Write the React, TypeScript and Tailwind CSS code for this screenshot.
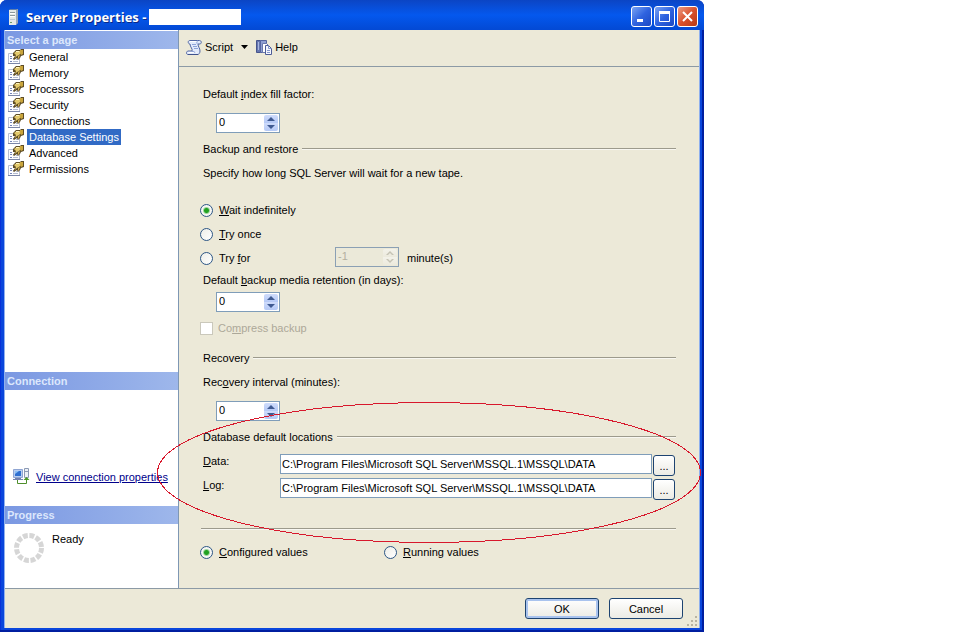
import { useState } from 'react';
import type { ReactNode } from 'react';

const pages = [
  'General',
  'Memory',
  'Processors',
  'Security',
  'Connections',
  'Database Settings',
  'Advanced',
  'Permissions',
];

function ServerIcon() {
  return (
    <svg width="16" height="16" viewBox="0 0 16 16" aria-hidden="true">
      <path d="M3 1l1-1h8v14l-2 2H3z" fill="#5f7fae" />
      <path d="M3 1h7v15H3z" fill="#e3e8e6" />
      <path d="M10 1l2-1v14l-2 2z" fill="#9aa7b5" />
      <path d="M4 3h5v1H4zM4 6h5v1H4z" fill="#8b979c" />
      <path d="M4 4h5v1H4zM4 7h5v1H4z" fill="#fff" />
      <path d="M4 10h5v1H4z" fill="#bcc8d2" />
      <path d="M4 13h2v1H4z" fill="#6d9b6d" />
    </svg>
  );
}

function PageIcon() {
  return (
    <svg width="16" height="16" viewBox="0 0 16 16" aria-hidden="true" className="shrink-0">
      <path d="M.5 4.500h11v10H.5z" fill="#fdfdff" stroke="#b9bfd0" />
      <path d="M0 14.500h12" stroke="#7b86a8" />
      <path d="M2 7h2v1H2zM2 9h2v1H2zM2 12h2v1H2z" fill="#7383b8" />
      <path d="M5 9h2v1H5zM5 12h5v1H5zM8 10h2v1H8z" fill="#b3bbd0" />
      <path d="M5 4l3-3h4l1-1h3v6l-3 1-1 2-2 2-1-2-3 2-1-1 2-3-2 0z" fill="#5e4d26" />
      <path d="M6 4l3-2h3l1 2-2 2-2 1-2 2 1-3z" fill="#e3c96b" />
      <path d="M12 1h3v4l-2 1-1-2z" fill="#c9a53c" />
      <path d="M8 2h3v1H8z" fill="#fff3bd" />
      <path d="M10 7l2-1-1 3-1 1z" fill="#d0b052" />
    </svg>
  );
}

function ScriptIcon() {
  return (
    <svg width="17" height="17" viewBox="0 0 17 17" aria-hidden="true">
      <path
        d="M3.500 1.500h10c2 0 2.500 3 .5 3.500h-2c0 3 2 4 2 7 0 2-1 3.500-2.500 3.500H2c-2 0-2-3 0-3.500h4c1-2-2-4-2-7-2 0-2.500-3-.5-3.500z"
        fill="#e2eafb"
        stroke="#5166a3"
      />
      <path d="M4 2.500h8M2.500 13.500h8" stroke="#fff" />
      <path d="M11.500 5c-1-1-1-2.500.5-3.500M6 12.500c1.500 0 3 0 3 1.500M6 5.500h4M7 7.500h4M8 9.500h4" fill="none" stroke="#8da3d8" />
      <path d="M2 15.500h10" stroke="#3f528d" />
    </svg>
  );
}

function HelpIcon() {
  return (
    <svg width="17" height="17" viewBox="0 0 17 17" aria-hidden="true">
      <path d="M.5 1.500h4v12h-4z" fill="#6677b0" stroke="#46558c" />
      <path d="M4.500 1.500h6v12h-6z" fill="#8e9fd2" stroke="#5565a0" />
      <path d="M2.500 3v8" stroke="#a9b7e2" />
      <path d="M6.500 4.500h4l2 2v7h-6z" fill="#fff" stroke="#6a79ad" />
      <path d="M9.500 6.500h3l3 3v6h-6z" fill="#f4f7fe" stroke="#4d5d97" />
      <path d="M12.500 6.500v3h3M11 11.500h3M11 13.500h3" fill="none" stroke="#8496cc" />
    </svg>
  );
}

function ConnectionIcon() {
  return (
    <svg width="17" height="17" viewBox="0 0 17 17" aria-hidden="true">
      <path d="M.5 1.500h9v8h-9z" fill="#b8cdf0" stroke="#8fa5d2" />
      <path d="M2 3h6v5H2z" fill="#2f6fd0" />
      <path d="M2 3h4L2 6z" fill="#8cc0f5" />
      <path d="M2 10h6v1h2v1H0v-1h2z" fill="#7382ae" />
      <path d="M11.500 .5h4v9h-4z" fill="#edf1f6" stroke="#8c9ab5" />
      <path d="M12 3h3v1h-3z" fill="#8c9ab5" />
      <path d="M4.500 12v3.500h9v-4" fill="none" stroke="#4f8f2c" />
      <path d="M10.500 12l3-3 3 3z" fill="#4a9a22" />
    </svg>
  );
}

function IdleSpinner() {
  return (
    <svg width="32" height="32" viewBox="0 0 32 32" aria-hidden="true">
      <circle cx="16" cy="16" r="12.500" fill="none" stroke="#d6d6d6" strokeWidth="5" strokeDasharray="4.900 1.645" />
    </svg>
  );
}

function TitleButton({ label, close, children }: { label: string; close?: boolean; children: ReactNode }) {
  return (
    <button
      type="button"
      aria-label={label}
      className={
        close
          ? 'flex size-[21px] items-center justify-center rounded-[3px] border border-white bg-linear-to-br from-[#ec9a80] via-[#d9512c] to-[#b93a14]'
          : 'flex size-[21px] items-center justify-center rounded-[3px] border border-white bg-linear-to-br from-[#7ba2f2] via-[#2f63e0] to-[#1b48c4]'
      }
    >
      <svg width="15" height="15" viewBox="0 0 15 15" fill="none" stroke="#fff" aria-hidden="true">
        {children}
      </svg>
    </button>
  );
}

function SidebarHeader({ children }: { children: ReactNode }) {
  return (
    <h2 className="h-[18px] shrink-0 bg-linear-to-r from-[#7b98e2] to-[#9eb7eb] px-[2px] text-[11px] leading-[18px] font-bold text-[#dce7fc]">
      {children}
    </h2>
  );
}

function Spin({ id, label, initial, disabled }: { id: string; label?: string; initial: number; disabled?: boolean }) {
  const [value, setValue] = useState(initial);
  const arrow = disabled ? '#c5c3b4' : '#3f5a92';
  const step =
    'flex h-2 w-full items-center justify-center bg-linear-to-b from-[#cfdcfb] to-[#b5c9f6] disabled:from-[#f3f2ea] disabled:to-[#eceadd]';

  return (
    <div
      className={
        disabled
          ? 'flex h-5 w-16 border border-[#8ba0b4] bg-[#ebe9d9] p-px'
          : 'flex h-5 w-16 border border-[#7f9db9] bg-white p-px'
      }
    >
      <input
        id={id}
        aria-label={label}
        type="number"
        value={value}
        disabled={disabled}
        onChange={(e) => setValue(Number(e.target.value))}
        className="h-[14px] min-w-0 flex-1 appearance-none px-px leading-[14px] outline-none [-moz-appearance:textfield] disabled:text-[#b3b09f] [&::-webkit-inner-spin-button]:appearance-none"
      />
      <div className="w-[14px] overflow-hidden rounded-[2px]">
        <button type="button" aria-label="Increase" disabled={disabled} onClick={() => setValue(value + 1)} className={step}>
          <svg width="8" height="4" viewBox="0 0 8 4" aria-hidden="true">
            <path d={disabled ? 'M4 0l4 4H6L4 2 2 4H0z' : 'M4 0l4 4H0z'} fill={arrow} />
          </svg>
        </button>
        <button type="button" aria-label="Decrease" disabled={disabled} onClick={() => setValue(value - 1)} className={step}>
          <svg width="8" height="4" viewBox="0 0 8 4" aria-hidden="true">
            <path d={disabled ? 'M4 4l4-4H6L4 2 2 0H0z' : 'M4 4l4-4H0z'} fill={arrow} />
          </svg>
        </button>
      </div>
    </div>
  );
}

function Radio({ name, defaultChecked, children }: { name: string; defaultChecked?: boolean; children: ReactNode }) {
  return (
    <label className="flex h-4 items-center gap-[6px]">
      <input
        type="radio"
        name={name}
        defaultChecked={defaultChecked}
        className="size-[13px] appearance-none rounded-full border border-[#2c5686] bg-linear-to-br from-[#eeeee8] to-white checked:bg-[radial-gradient(circle,#21a121_0_2px,#9fd69f_3px,#f6f6f3_4px)]"
      />
      <span>{children}</span>
    </label>
  );
}

function Divider() {
  return <div className="h-[2px] flex-1 border-t border-[#9c9a8c] bg-[#f8f7f1]" />;
}

function SectionTitle({ children }: { children: ReactNode }) {
  return (
    <div className="flex h-4 items-center gap-1 pl-[3px]">
      <h3>{children}</h3>
      <Divider />
    </div>
  );
}

function PathRow({ id, label, initial }: { id: string; label: ReactNode; initial: string }) {
  return (
    <div className="flex h-[22px] items-start gap-px pr-px pl-[3px]">
      <label htmlFor={id} className="-mt-px w-[76px] shrink-0">
        {label}
      </label>
      <input
        id={id}
        type="text"
        defaultValue={initial}
        className="h-5 min-w-0 flex-1 border border-[#7f9db9] bg-white px-px outline-none"
      />
      <button
        type="button"
        aria-label="Browse"
        className="mt-px h-[21px] w-[22px] rounded-[3px] border border-[#1d4371] bg-linear-to-b from-white to-[#ecebe4] leading-[21px]"
      >
        ...
      </button>
    </div>
  );
}

export default function App() {
  const [selected, setSelected] = useState('Database Settings');

  return (
    <div className="grid min-h-screen grid-cols-[11fr_4fr] bg-white font-['Liberation_Sans',Arial,sans-serif] text-[11px] leading-4 text-black">
      <div className="relative flex flex-col rounded-t-[7px] bg-[#0a46dc] shadow-[inset_-2px_-2px_#001ea0,inset_1px_0_#0831d9]">
        <header className="flex h-[30px] shrink-0 items-center rounded-t-[7px] bg-linear-to-b from-[#0b45c4] via-[#0458ee] to-[#0349d4] pt-[3px] pr-[6px] pl-[6px]">
          <ServerIcon />
          <h1 className="ml-1 font-['Open_Sans','Noto_Sans',sans-serif] text-[13px] font-bold whitespace-nowrap text-white [text-shadow:1px_1px_#0a2a86]">
            Server Properties -
          </h1>
          <div className="ml-[3px] h-4 w-[92px] bg-white" />
          <div className="ml-auto flex gap-[2px]">
            <TitleButton label="Minimize">
              <path d="M3 11.500h6" strokeWidth="3" />
            </TitleButton>
            <TitleButton label="Maximize">
              <path d="M2.500 3v9.500h10V3" />
              <path d="M2 3.500h11" strokeWidth="3" />
            </TitleButton>
            <TitleButton label="Close" close>
              <path d="M3 3l9 9M12 3l-9 9" strokeWidth="2" />
            </TitleButton>
          </div>
        </header>

        <div className="mr-1 mb-1 ml-1 flex flex-1 flex-col border-x border-[#8fb0ee] bg-[#ece9d8]">
          <div className="flex flex-1 border-b border-[#8c9aa5]">
            <aside className="flex w-[174px] shrink-0 flex-col border-r border-[#7e97b4] bg-white pt-px">
              <SidebarHeader>Select a page</SidebarHeader>
              <ul className="flex-1">
                {pages.map((page) => (
                  <li key={page} className="flex h-4 items-center gap-[3px] pl-[3px]">
                    <PageIcon />
                    <button
                      type="button"
                      onClick={() => setSelected(page)}
                      className={selected === page ? 'bg-[#316ac5] px-[2px] text-white' : 'px-[2px]'}
                    >
                      {page}
                    </button>
                  </li>
                ))}
              </ul>
              <SidebarHeader>Connection</SidebarHeader>
              <div className="flex h-[116px] items-end gap-[6px] pb-[21px] pl-2">
                <ConnectionIcon />
                <a href="#connection" className="whitespace-nowrap text-[#00008b] underline">
                  View connection properties
                </a>
              </div>
              <SidebarHeader>Progress</SidebarHeader>
              <div className="flex h-16 items-start gap-[7px] pt-[7px] pl-2">
                <div className="pt-px">
                  <IdleSpinner />
                </div>
                <span>Ready</span>
              </div>
            </aside>

            <main className="flex flex-1 flex-col">
              <div className="flex h-[37px] shrink-0 items-center border-b border-[#8c9aa5] bg-[#ece9d8] pb-[2px] pl-[7px]">
                <button type="button" className="flex items-center gap-[2px]">
                  <ScriptIcon />
                  Script
                  <svg width="7" height="4" viewBox="0 0 7 4" className="ml-[6px]" aria-hidden="true">
                    <path d="M0 0h7L3.500 4z" />
                  </svg>
                </button>
                <button type="button" className="ml-2 flex items-center gap-[2px]">
                  <HelpIcon />
                  Help
                </button>
              </div>

              <form className="flex flex-1 flex-col pt-[19px] pr-[23px] pl-[21px]">
                <label htmlFor="fill-factor" className="pl-[3px]">
                  Default <u>i</u>ndex fill factor:
                </label>
                <div className="mt-[11px] pl-4">
                  <Spin id="fill-factor" initial={0} />
                </div>

                <div className="mt-2 flex flex-col gap-2">
                  <SectionTitle>Backup and restore</SectionTitle>
                  <p className="pl-[3px]">Specify how long SQL Server will wait for a new tape.</p>
                </div>
                <div className="mt-[21px] flex flex-col gap-2">
                  <Radio name="tape" defaultChecked>
                    <u>W</u>ait indefinitely
                  </Radio>
                  <Radio name="tape">
                    <u>T</u>ry once
                  </Radio>
                </div>
                <div className="mt-[5px] flex h-5 items-center">
                  <div className="w-[135px] pt-[2px]">
                    <Radio name="tape">
                      Try <u>f</u>or
                    </Radio>
                  </div>
                  <Spin id="try-minutes" label="Minutes to try for" initial={-1} disabled />
                  <label htmlFor="try-minutes" className="pt-[2px] pl-2">
                    minute(s)
                  </label>
                </div>
                <label htmlFor="retention" className="mt-[5px] pl-[3px]">
                  Default <u>b</u>ackup media retention (in days):
                </label>
                <div className="mt-1 pl-4">
                  <Spin id="retention" initial={0} />
                </div>
                <label className="mt-2 flex h-4 items-center gap-[5px] text-[#aca899]">
                  <input type="checkbox" disabled className="size-[13px] appearance-none border border-[#cac8bb] bg-white" />
                  <span>
                    Co<u>m</u>press backup
                  </span>
                </label>

                <div className="mt-[14px] flex flex-col gap-2">
                  <SectionTitle>Recovery</SectionTitle>
                  <label htmlFor="recovery" className="pl-[3px]">
                    Rec<u>o</u>very interval (minutes):
                  </label>
                </div>
                <div className="mt-[11px] pl-4">
                  <Spin id="recovery" initial={0} />
                </div>

                <div className="mt-2">
                  <SectionTitle>Database default locations</SectionTitle>
                </div>
                <div className="mt-[9px] flex flex-col gap-[2px]">
                  <PathRow
                    id="data-path"
                    label={<><u>D</u>ata:</>}
                    initial="C:\Program Files\Microsoft SQL Server\MSSQL.1\MSSQL\DATA"
                  />
                  <PathRow
                    id="log-path"
                    label={<><u>L</u>og:</>}
                    initial="C:\Program Files\Microsoft SQL Server\MSSQL.1\MSSQL\DATA"
                  />
                </div>

                <div className="mt-7 flex pl-px">
                  <Divider />
                </div>
                <div className="mt-[14px] mb-7 flex">
                  <div className="w-[184px]">
                    <Radio name="values" defaultChecked>
                      <u>C</u>onfigured values
                    </Radio>
                  </div>
                  <Radio name="values">
                    <u>R</u>unning values
                  </Radio>
                </div>
              </form>
            </main>
          </div>

          <footer className="flex h-[39px] shrink-0 items-center justify-end gap-[10px]">
            <button
              type="button"
              className="h-[21px] w-[74px] rounded-[3px] border border-[#1d4371] bg-linear-to-b from-white to-[#ecebe4] shadow-[inset_0_0_0_2px_#a9c3ee]"
            >
              OK
            </button>
            <button
              type="button"
              className="h-[21px] w-[74px] rounded-[3px] border border-[#1d4371] bg-linear-to-b from-white to-[#ecebe4]"
            >
              Cancel
            </button>
            <svg width="12" height="12" viewBox="0 0 12 12" className="-ml-[6px] self-end" aria-hidden="true">
              <path d="M8 0h2v2H8zM4 4h2v2H4zM8 4h2v2H8zM0 8h2v2H0zM4 8h2v2H4zM8 8h2v2H8z" fill="#b8b4a2" />
            </svg>
          </footer>
        </div>

        {/* red mark around the default locations */}
        <svg
          className="pointer-events-none absolute top-[402px] right-[3px] left-[157px] h-[141px] w-[calc(100%-160px)]"
          shapeRendering="crispEdges"
          aria-hidden="true"
        >
          <ellipse cx="50%" cy="50%" rx="49.900%" ry="49.600%" fill="none" stroke="#d8182c" />
        </svg>
      </div>
    </div>
  );
}
